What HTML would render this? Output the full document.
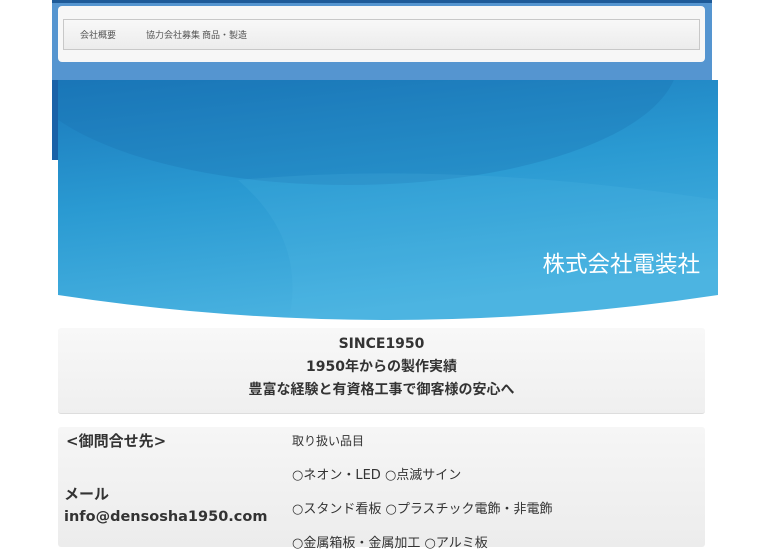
<!DOCTYPE html>
<html><head><meta charset="utf-8"><style>
body{margin:0;width:765px;height:541px;overflow:hidden;background:#fff;font-family:"DejaVu Sans","Noto Sans CJK JP",sans-serif;position:relative}
.hd{position:absolute;left:52px;top:0;width:660px;height:80px;background:#5595d0}
.hdt{position:absolute;left:52px;top:0;width:660px;height:3px;background:#1e5a98}
.lbar{position:absolute;left:52px;top:80px;width:6px;height:80px;background:#1a62a8}
.card{position:absolute;left:58px;top:6px;width:647px;height:56px;background:#f7f7f7;border-radius:4px}
.nav{position:absolute;left:63px;top:19px;width:635px;height:29px;border:1px solid #c8c8c8;background:linear-gradient(#f8f8f8,#ececec);font-size:9px;color:#555;line-height:29px;font-family:"Noto Sans CJK JP",sans-serif}
.nav span{position:absolute;top:0}
.ban{position:absolute;left:58px;top:80px;width:660px;height:243px;overflow:hidden}
.box1{position:absolute;left:58px;top:328px;width:647px;height:85px;background:linear-gradient(#f8f8f8,#efefef);border-bottom:1px solid #ddd;border-radius:3px;text-align:center;font-weight:bold;font-size:14px;color:#333;line-height:20px}
.box2{position:absolute;left:58px;top:427px;width:647px;height:120px;background:linear-gradient(#f6f6f6,#ececec);border-radius:3px;color:#333}
.t{position:absolute;white-space:nowrap;line-height:20px}
</style></head><body>
<div class="hd"></div><div class="hdt"></div><div class="lbar"></div>
<div class="card"></div>
<div class="nav"><span style="left:16px">会社概要</span><span style="left:82px">協力会社募集 商品・製造</span></div>
<div class="ban">
<svg width="660" height="243" viewBox="0 0 660 243">
<defs><linearGradient id="g" x1="0" y1="0" x2="0.3" y2="1"><stop offset="0" stop-color="#1a78bb"/><stop offset="0.5" stop-color="#2a9ad2"/><stop offset="1" stop-color="#49b2e0"/></linearGradient></defs>
<rect width="660" height="243" fill="url(#g)"/>
<ellipse cx="290" cy="-20" rx="330" ry="125" fill="#1a6fae" opacity="0.3"/>
<path d="M180 100 Q250 160 230 243 L660 243 L660 120 Q400 80 180 100Z" fill="#5ec0ea" opacity="0.15"/>
<path d="M0 215 Q330 265 660 215 L660 243 L0 243Z" fill="#fff"/>
<text x="642" y="192" text-anchor="end" font-size="22.5" fill="#fff" font-family="Noto Sans CJK JP,sans-serif">株式会社電装社</text>
</svg></div>
<div class="box1"><div style="position:absolute;top:6px;width:100%">SINCE1950</div><div style="position:absolute;top:29px;width:100%">1950年からの製作実績</div><div style="position:absolute;top:52px;width:100%">豊富な経験と有資格工事で御客様の安心へ</div></div>
<div class="box2">
<div class="t" style="left:8px;top:4px;font-size:15px;font-weight:bold">&lt;御問合せ先&gt;</div>
<div class="t" style="left:6px;top:57px;font-size:15px;font-weight:bold">メール</div>
<div class="t" style="left:6px;top:80px;font-size:14.5px;font-weight:bold">info@densosha1950.com</div>
<div class="t" style="left:234px;top:4px;font-size:12px">取り扱い品目</div>
<div class="t" style="left:234px;top:39px;font-size:13px">○ネオン・LED ○点滅サイン</div>
<div class="t" style="left:234px;top:73px;font-size:13px">○スタンド看板 ○プラスチック電飾・非電飾</div>
<div class="t" style="left:234px;top:107px;font-size:13px">○金属箱板・金属加工 ○アルミ板</div>
</div>
</body></html>
